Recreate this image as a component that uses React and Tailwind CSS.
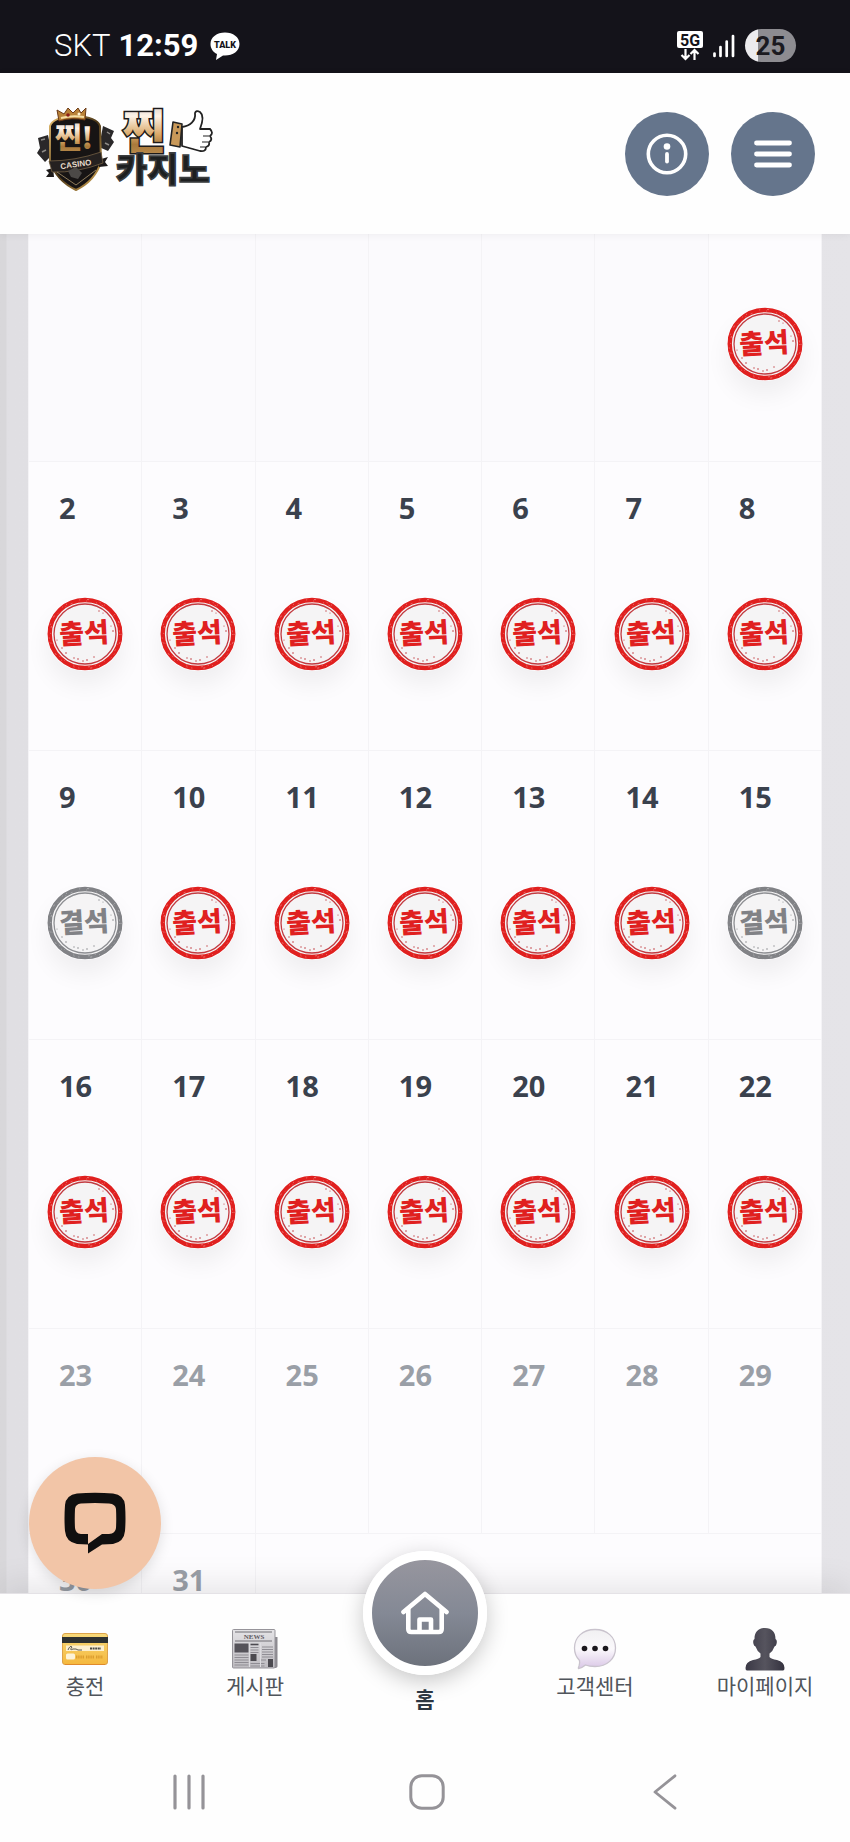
import React, { useState } from "react";

// Attendance calendar, "in" = attended, "out" = absent
const weeks = [
  [{}, {}, {}, {}, {}, {}, { mark: "in" }],
  [2, 3, 4, 5, 6, 7, 8].map((day) => ({ day, mark: "in" })),
  [9, 10, 11, 12, 13, 14, 15].map((day) => ({ day, mark: day === 9 || day === 15 ? "out" : "in" })),
  [16, 17, 18, 19, 20, 21, 22].map((day) => ({ day, mark: "in" })),
  [23, 24, 25, 26, 27, 28, 29].map((day) => ({ day })),
  [{ day: 30 }, { day: 31 }, { span: 5 }],
];

const rowHeights = ["h-[227px]", "h-[289px]", "h-[289px]", "h-[289px]", "h-[205px]", "h-[205px]"];

const Stamp = ({ mark }) => {
  const color = mark === "in" ? "#e0201f" : "#818286";
  const line = mark === "in" ? "#c23a40" : "#8d8e92";
  return (
    <svg viewBox="0 0 76 74" className="block mx-auto w-[76px] h-[74px] rounded-full shadow-[0_14px_24px_rgba(0,0,0,0.06)]">
      <ellipse cx="38" cy="37" rx="35.3" ry="34" fill="#f5f4f5" stroke={color} strokeWidth="4.4" />
      <ellipse cx="38" cy="37" rx="31" ry="30" fill="none" stroke={line} strokeWidth="1.3" />
      {/* worn ink */}
      <ellipse cx="38" cy="37" rx="36" ry="34.5" fill="none" stroke="#ffffff" strokeOpacity="0.5" strokeWidth="0.8" strokeDasharray="1 7 2 11 1 4 1 13" />
      <ellipse cx="38" cy="37" rx="34.5" ry="33" fill="none" stroke="#ffffff" strokeOpacity="0.45" strokeWidth="0.7" strokeDasharray="1 9 1 5 2 14" />
      <g fill={line}>
        <circle cx="15" cy="51" r="0.7" />
        <circle cx="19" cy="56" r="0.8" />
        <circle cx="27" cy="61" r="0.7" />
        <circle cx="31" cy="62" r="0.8" />
        <circle cx="36" cy="64" r="0.7" />
        <circle cx="40" cy="63" r="0.8" />
        <circle cx="47" cy="60" r="0.7" />
        <circle cx="52" cy="14" r="0.7" />
        <circle cx="56" cy="16" r="0.6" />
        <circle cx="66" cy="34" r="0.8" />
        <circle cx="64" cy="29" r="0.6" />
        <circle cx="10" cy="43" r="0.6" />
      </g>
      <text
        x="37"
        y="46"
        textAnchor="middle"
        fill={color}
        transform="rotate(-3 38 37)"
        className="font-['Noto_Sans_CJK_KR',sans-serif] text-[27px] font-black"
      >
        {mark === "in" ? "출석" : "결석"}
      </text>
    </svg>
  );
};

const Logo = () => (
  <svg viewBox="0 0 176 97" className="block w-[176px] h-[97px] overflow-visible" role="img" aria-label="찐카지노">
    <defs>
      <linearGradient id="gold" x1="0" y1="0" x2="0" y2="1">
        <stop offset="0" stopColor="#b9b1ae" />
        <stop offset="0.32" stopColor="#fdf3e8" />
        <stop offset="0.6" stopColor="#d9a766" />
        <stop offset="0.75" stopColor="#a97a3c" />
        <stop offset="1" stopColor="#c09355" />
      </linearGradient>
      <linearGradient id="rim" x1="0" y1="0" x2="1" y2="1">
        <stop offset="0" stopColor="#e9c070" />
        <stop offset="0.5" stopColor="#4a3515" />
        <stop offset="1" stopColor="#e2b45d" />
      </linearGradient>
    </defs>
    {/* cards behind the shield */}
    <path d="M1 33 L11 30 L15 50 L8 57 L0 48 L3 43 Z" fill="#2a2829" />
    <path d="M66 21 L77 26 L74 33 L77 37 L71 46 L62 42 Z" fill="#2a2829" />
    <path d="M4 35 l4 -1 M5 47 l4 -2 M70 27 l3 2 M68 38 l4 2" stroke="#8d8a86" strokeWidth="1.5" />
    <path d="M13 21 Q16 12 38 11 Q60 12 63 21 L64 57 Q58 76 39 85 Q20 76 13 57 Z" fill="#171414" stroke="url(#rim)" strokeWidth="2" />
    <path d="M22 16 L20 5 L27 9 L31 3 L36 8 L41 3 L44 8 L49 3 L48 15 Q35 12 22 16 Z" fill="#b98238" stroke="#6c3a16" strokeWidth="1" />
    <path d="M24 13 Q35 10 47 12" stroke="#f6dfa4" strokeWidth="2" fill="none" />
    <circle cx="31" cy="10" r="1.8" fill="#8c1d18" />
    <circle cx="42" cy="9" r="1.5" fill="#fff3cf" />
    <text x="37" y="44" textAnchor="middle" fill="url(#gold)" className="font-['Noto_Sans_CJK_KR',sans-serif] text-[29px] font-black">
      찐!
    </text>
    <path d="M9 65 L16 63 L17 72 L9 72 L12 68 Z M61 55 L71 52 L68 57 L71 61 L62 62 Z" fill="#1d1a1a" />
    <path d="M12 56 Q38 56 64 47 L66 58 Q40 68 15 67 Z" fill="#252120" stroke="#746044" strokeWidth="0.8" />
    <text x="39" y="62" textAnchor="middle" fill="#e8dccb" transform="rotate(-8 39 60)" className="font-['Liberation_Sans',sans-serif] text-[8px] font-bold">
      CASINO
    </text>
    <path d="M20 67 L39 80 L59 65" fill="none" stroke="#9c8763" strokeWidth="0.9" />
    <path d="M31 66 L39 62 L45 68 L41 74 L34 72 Z" fill="#4c4947" />

    <text
      x="107"
      y="43"
      textAnchor="middle"
      fill="url(#gold)"
      stroke="#1c1a1a"
      strokeWidth="3"
      paintOrder="stroke"
      className="font-['Noto_Sans_CJK_KR',sans-serif] text-[46px] font-black"
    >
      찐
    </text>
    <text
      x="126"
      y="77"
      textAnchor="middle"
      fill="#1d1f20"
      stroke="#3a3d3f"
      strokeWidth="1.6"
      className="font-['Noto_Sans_CJK_KR',sans-serif] text-[34px] font-black"
    >
      카지노
    </text>
    {/* thumbs up */}
    <path
      d="M145 22 C153 21 159 16 158 8 Q159 5 163 7 Q168 11 163 24 L173 24 Q177 28 173 31 Q176 35 172 37 Q173 41 169 42 Q169 47 163 46 L145 41 Z"
      fill="#fff"
      stroke="#222"
      strokeWidth="1.8"
      strokeLinejoin="round"
    />
    <path d="M166 31 l6 0 M165 37 l6 0 M163 42 l5 0" stroke="#222" strokeWidth="1.2" />
    <path d="M136 17 L145 19 L143 42 L133 40 Z" fill="#c99959" stroke="#222" strokeWidth="1.6" strokeLinejoin="round" />
    <circle cx="141" cy="22" r="1.2" fill="#222" />
    <circle cx="140" cy="28" r="1.2" fill="#222" />
  </svg>
);

const CardIcon = () => (
  <svg viewBox="0 0 48 48" className="block w-12 h-12">
    <defs>
      <linearGradient id="card" x1="0" y1="0" x2="0" y2="1">
        <stop offset="0" stopColor="#f7d97a" />
        <stop offset="1" stopColor="#f5b83d" />
      </linearGradient>
    </defs>
    <rect x="1.5" y="8.5" width="45" height="31" rx="2.5" fill="url(#card)" stroke="#dca24a" strokeWidth="1" />
    <rect x="1" y="12" width="46" height="6" fill="#2e3130" />
    <rect x="5" y="20.5" width="38" height="5.5" fill="#fdf0cf" />
    <path d="M7 25 q2 -5 4 -3 q-3 4 1 2 l3 0 l2 1 l4 0" fill="none" stroke="#4a4a45" strokeWidth="0.9" />
    <path d="M29 23.5 h11" stroke="#4a4a45" strokeWidth="1.8" strokeDasharray="2 0.6" />
    <rect x="5" y="28.5" width="9" height="6" rx="1.5" fill="#fdf3d8" />
    <path d="M15 32 h27" stroke="#dc9d2f" strokeWidth="3" strokeDasharray="1.4 0.8 1.4 0.8 1.4 0.8 1.4 2" />
    <path d="M4 39.5 h40" stroke="#e08a2c" strokeWidth="1" />
  </svg>
);

const NewsIcon = () => (
  <svg viewBox="0 0 48 48" className="block w-12 h-12">
    <defs>
      <linearGradient id="paper" x1="0" y1="0" x2="0" y2="1">
        <stop offset="0" stopColor="#e4e3e6" />
        <stop offset="1" stopColor="#bdbbc0" />
      </linearGradient>
    </defs>
    <path d="M40 12 h6.5 v29 q0 2 -3 2 h-6 Z" fill="#8c8a90" />
    <rect x="1.5" y="4.5" width="42.5" height="38.5" rx="1" fill="url(#paper)" stroke="#96949a" strokeWidth="1" />
    <path d="M4 7 h37 M4 16 h37" stroke="#706e74" strokeWidth="1" />
    <text x="23" y="14" textAnchor="middle" fill="#5c5a60" className="font-['Liberation_Serif',serif] text-[7px] font-bold">
      NEWS
    </text>
    <rect x="3.5" y="18.5" width="14" height="9" fill="#55535a" />
    <rect x="19.5" y="29" width="6" height="7" fill="#4c4a50" />
    <rect x="37" y="34" width="5" height="8" fill="#4c4a50" />
    <path d="M19.5 19.5 h8" stroke="#4c4a50" strokeWidth="1.6" />
    <path
      d="M3.5 30 h14 M3.5 32.5 h14 M3.5 35 h14 M3.5 37.5 h14 M3.5 40 h14 M19.5 22.5 h8 M19.5 25 h8 M19.5 27.5 h8 M19.5 38.5 h14 M19.5 41 h14 M31 22 h11 M31 24.5 h11 M31 27 h11 M31 29.5 h11 M31 32 h11 M29 35 h6"
      stroke="#8f8d94"
      strokeWidth="1.1"
    />
    <path d="M18.5 18 v24 M29.5 18 v24" stroke="#dddce0" strokeWidth="1" />
  </svg>
);

const TalkIcon = () => (
  <svg viewBox="0 0 48 48" className="block w-12 h-12">
    <defs>
      <linearGradient id="talk" x1="0" y1="0" x2="0" y2="1">
        <stop offset="0" stopColor="#f1f0f2" />
        <stop offset="0.5" stopColor="#fbf9fc" />
        <stop offset="1" stopColor="#d9c6e6" />
      </linearGradient>
    </defs>
    <path
      d="M24 4.5 C36 4.5 44.5 12 44.5 23 C44.5 34 36 41.5 24 41.5 C20 41.5 17 41 14.5 40 Q11 43 7.5 43.5 Q7 43 8 41 Q9 38 8.5 35.5 C5 32 3.5 28 3.5 23 C3.5 12 12 4.5 24 4.5 Z"
      fill="url(#talk)"
      stroke="#c9c3cd"
      strokeWidth="1.3"
    />
    <circle cx="13.5" cy="23.5" r="2.8" fill="#1a171c" />
    <circle cx="24" cy="23.5" r="2.8" fill="#1a171c" />
    <circle cx="34.5" cy="23.5" r="2.8" fill="#1a171c" />
  </svg>
);

const UserIcon = () => (
  <svg viewBox="0 0 48 48" className="block w-12 h-12">
    <defs>
      <linearGradient id="user" x1="0" y1="0" x2="1" y2="0">
        <stop offset="0" stopColor="#3b3946" />
        <stop offset="0.5" stopColor="#56545e" />
        <stop offset="1" stopColor="#34323f" />
      </linearGradient>
    </defs>
    <path
      d="M24 3 C31 3 34.5 7 34.5 14 Q36.5 15 35.5 19 Q35 21 33.5 21.5 Q32 26 28.5 28.5 L28.5 32 Q30 34 36 35 Q43.5 37 43.5 43 Q43.5 45.5 42 45.5 L6 45.5 Q4.5 45.5 4.5 43 Q4.5 37 12 35 Q18 34 19.5 32 L19.5 28.5 Q16 26 14.5 21.5 Q13 21 12.5 19 Q11.5 15 13.5 14 C13.5 7 17 3 24 3 Z"
      fill="url(#user)"
    />
  </svg>
);

const NavItem = ({ label, children }) => (
  <a href="#" className="flex flex-col items-center pt-[31px] text-[21px] leading-6 text-[#50555b]">
    {children}
    <span>{label}</span>
  </a>
);

const StatusBar = () => (
  <div className="shrink-0 h-[73px] pt-[18px] px-[54px] flex items-center justify-between bg-[#14131a] text-white font-['Roboto',sans-serif]">
    <div className="flex items-center text-[31px] leading-9">
      <span className="font-light">SKT</span>
      <span className="ml-2 font-bold">12:59</span>
      <svg viewBox="0 0 30 28" className="ml-3 w-[30px] h-7">
        <path d="M15 0.5 C23 0.5 29.5 5 29.5 12 C29.5 19 23 23.5 15 23.5 L13 23.5 L6 28 L7 22 C3 20 0.5 16.5 0.5 12 C0.5 5 7 0.5 15 0.5 Z" fill="#fff" />
        <text x="15" y="15.5" textAnchor="middle" fill="#14131a" className="font-['Roboto',sans-serif] text-[9px] font-black">
          TALK
        </text>
      </svg>
    </div>
    <div className="flex items-center gap-[10px]">
      <svg viewBox="0 0 26 30" className="w-[26px] h-[30px]">
        <rect x="0" y="0" width="26" height="17" rx="2" fill="#fff" />
        <text x="13" y="14.5" textAnchor="middle" fill="#14131a" className="font-['Roboto',sans-serif] text-[16px] font-bold">
          5G
        </text>
        <path d="M8.5 18 V28 M4.5 24 L8.5 28 L12.5 24 M17.5 29 V19 M13.5 23 L17.5 19 L21.5 23" fill="none" stroke="#fff" strokeWidth="2.2" />
      </svg>
      <svg viewBox="0 0 22 24" className="w-[22px] h-6">
        <path d="M1.5 19.5 V22 M7.5 13 V22 M13.7 7.5 V22 M20 2 V22" stroke="#fff" strokeWidth="2.7" strokeLinecap="round" />
      </svg>
      <div className="w-[51px] h-[33px] rounded-full bg-linear-to-r from-[#ecebee] from-25% to-[#8d8c91] to-25% flex items-center justify-center text-[26px] leading-none font-bold text-[#1b1a20]">
        25
      </div>
    </div>
  </div>
);

const App = () => {
  const [chatOpen, setChatOpen] = useState(false);

  return (
    <div className="h-screen flex flex-col overflow-hidden bg-[#fefefe] font-['Noto_Sans_CJK_KR',sans-serif]">
      <StatusBar />

      <header className="relative z-10 shrink-0 h-[161px] pl-[37px] pr-[35px] flex items-center justify-between bg-[#fefefe] shadow-[0_1px_8px_rgba(0,0,0,0.06)]">
        <a href="#">
          <Logo />
        </a>
        <div className="flex gap-[22px]">
          <button type="button" aria-label="안내" className="w-[84px] h-[84px] rounded-full bg-[#65758c] flex items-center justify-center">
            <svg viewBox="0 0 42 42" className="w-[42px] h-[42px]">
              <circle cx="21" cy="21" r="18.7" fill="none" stroke="#fff" strokeWidth="3.6" />
              <circle cx="21" cy="13.5" r="3.3" fill="#fff" />
              <path d="M21 21 V28.5" stroke="#fff" strokeWidth="3.8" strokeLinecap="round" />
            </svg>
          </button>
          <button type="button" aria-label="메뉴" className="w-[84px] h-[84px] rounded-full bg-[#65758c] flex items-center justify-center">
            <svg viewBox="0 0 38 28" className="w-[38px] h-7">
              <path d="M2.5 3 H35.5 M2.5 14 H35.5 M2.5 25 H35.5" stroke="#fff" strokeWidth="4.8" strokeLinecap="round" />
            </svg>
          </button>
        </div>
      </header>

      <div className="relative flex-1 min-h-0">
        <main className="h-full overflow-hidden px-7 bg-linear-to-r from-[#d8d7da] from-[6px] via-[#e0dfe3] via-[7px] to-[#e5e4e8]">
          <table className="w-full table-fixed border-collapse bg-[#fdfcfe] font-['Noto_Sans',sans-serif]">
            <tbody>
              {weeks.map((week, i) => (
                <tr key={i} className={rowHeights[i]}>
                  {week.map((cell, j) => (
                    <td
                      key={j}
                      colSpan={cell.span || 1}
                      className={`p-0 align-top border border-t-0 border-[#f4f3f6] ${i === 0 && !cell.mark ? "bg-[#fbfafd]" : ""}`}
                    >
                      {cell.day && (
                        <div className={`pt-[26px] pl-[30px] text-[29px] leading-10 font-bold ${cell.mark ? "text-[#3a414d]" : "text-[#9a9fa7]"}`}>
                          {cell.day}
                        </div>
                      )}
                      {cell.mark && (
                        <div className={cell.day ? "pt-[69px]" : "pt-[73px]"}>
                          <Stamp mark={cell.mark} />
                        </div>
                      )}
                    </td>
                  ))}
                </tr>
              ))}
            </tbody>
          </table>
        </main>

        {/* Live chat */}
        <button
          type="button"
          aria-label="채팅"
          onClick={() => setChatOpen(!chatOpen)}
          className="absolute z-20 left-[29px] bottom-1 w-[132px] h-[132px] rounded-full bg-[#f2c5a7] shadow-[0_4px_14px_rgba(0,0,0,0.12)] flex items-center justify-center"
        >
          <svg viewBox="0 0 62 62" className="w-[62px] h-[62px]">
            <path
              fillRule="evenodd"
              d="M13 1.5 Q31 0 49 1.5 Q60 3 61 13 Q62 27 61 39 Q60 50 49 52 L38 52.5 L24 61.5 V52.5 L13 52 Q2 50 1 39 Q0 27 1 13 Q2 3 13 1.5 Z M17 11.5 Q11.5 12 11 17 Q10.5 27 11 36 Q11.5 41.5 17 42 L24 42 V52 L38 42 H45 Q51.5 41.5 52 36 Q52.5 27 52 17 Q51.5 12 45 11.5 Q31 10.5 17 11.5 Z"
              fill="#100f0f"
            />
          </svg>
        </button>
      </div>

      <nav className="relative z-10 shrink-0 h-[149px] grid grid-cols-5 border-t border-[#e4e2e6] bg-[#fefefe] shadow-[0_-6px_32px_rgba(0,0,0,0.1)]">
        <NavItem label="충전">
          <CardIcon />
        </NavItem>
        <NavItem label="게시판">
          <NewsIcon />
        </NavItem>
        <a href="#" className="flex flex-col items-center gap-[11px] -mt-[43px] text-[21px] leading-6 font-bold text-[#2b3642]">
          <span className="w-[124px] h-[124px] shrink-0 rounded-full border-[9px] border-white bg-linear-to-b from-[#9a98a0] via-[#848995] to-[#696e78] bg-origin-border shadow-[0_6px_22px_rgba(0,0,0,0.22)] flex items-center justify-center">
            <svg viewBox="0 0 48 44" className="w-12 h-11" fill="none" stroke="#fff" strokeWidth="4.6" strokeLinecap="round" strokeLinejoin="round">
              <path d="M2.5 21 L24 3 L45.5 21" />
              <path d="M7.3 18 V38 Q7.3 41 10.3 41 H37.7 Q40.7 41 40.7 38 V18" />
              <path d="M18.5 40 V28.5 H30 V40" />
            </svg>
          </span>
          <span>홈</span>
        </a>
        <NavItem label="고객센터">
          <TalkIcon />
        </NavItem>
        <NavItem label="마이페이지">
          <UserIcon />
        </NavItem>
      </nav>

      {/* Android navigation */}
      <div className="relative z-10 shrink-0 h-[100px] pl-[70px] pr-[66px] grid grid-cols-3 place-items-center bg-[#fefefe]">
        <button type="button" aria-label="최근 앱">
          <svg viewBox="0 0 36 36" className="block w-9 h-9">
            <path d="M4 2 V34 M18 2 V34 M32 2 V34" stroke="#959398" strokeWidth="3.2" strokeLinecap="round" />
          </svg>
        </button>
        <button type="button" aria-label="홈 화면">
          <svg viewBox="0 0 36 36" className="block w-9 h-9">
            <rect x="1.8" y="1.8" width="32.4" height="32.4" rx="11" fill="none" stroke="#959398" strokeWidth="3" />
          </svg>
        </button>
        <button type="button" aria-label="뒤로">
          <svg viewBox="0 0 36 36" className="block w-9 h-9">
            <path d="M28 1.8 L8 18 L28 34.2" fill="none" stroke="#959398" strokeWidth="2.8" strokeLinecap="round" strokeLinejoin="round" />
          </svg>
        </button>
      </div>
    </div>
  );
};

export default App;
